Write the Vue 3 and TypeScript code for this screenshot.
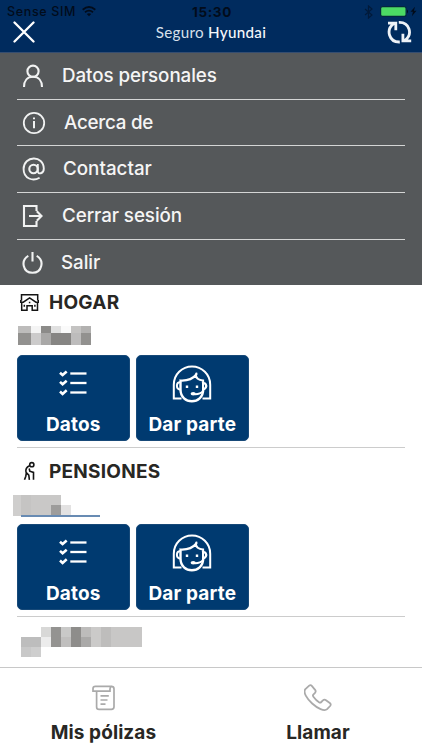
<script setup lang="ts">
type Block = [number, number, number, number, string]
interface MenuItem { icon: string; label: string }
interface Policy { id: string; title: string; blocks: Block[] }

const menu: MenuItem[] = [
  { icon: 'user', label: 'Datos personales' },
  { icon: 'info', label: 'Acerca de' },
  { icon: 'at', label: 'Contactar' },
  { icon: 'exit', label: 'Cerrar sesión' },
  { icon: 'quit', label: 'Salir' },
]

const policies: Policy[] = [
  {
    id: 'home',
    title: 'HOGAR',
    blocks: [
      [18, 7, 13, 7, '#bdbcbb'], [31, 7, 10, 7, '#f4f4f4'], [41, 7, 10, 7, '#8c8b89'], [51, 7, 10, 7, '#e0e0e0'],
      [61, 7, 10, 7, '#fafafa'], [71, 7, 10, 7, '#c4c3c2'], [81, 7, 10, 7, '#b2b1b0'],
      [18, 14, 13, 12, '#92918f'], [31, 14, 10, 12, '#cccbcb'], [41, 14, 10, 12, '#a9a8a7'], [51, 14, 20, 12, '#868583'],
      [71, 14, 10, 12, '#bdbcbc'], [81, 14, 10, 12, '#92918f'],
    ],
  },
  {
    id: 'pension',
    title: 'PENSIONES',
    blocks: [
      [13, 7, 8, 21, '#cfcecd'], [21, 7, 10, 21, '#c5c4c3'], [31, 7, 30, 21, '#c9c8c7'],
      [51, 17, 10, 10, '#9d9c9b'], [61, 17, 10, 10, '#e3e2e2'], [21, 27, 79, 1.5, '#688bb3'],
    ],
  },
]

const footerBlocks: Block[] = [
  [21, 20, 20, 10, '#bdbdbd'], [21, 30, 10, 10, '#c8c8c8'], [31, 30, 10, 10, '#cecece'],
  [41, 10, 10, 10, '#d8d8d7'], [41, 20, 10, 10, '#ececec'], [51, 10, 10, 20, '#949391'],
  [61, 10, 10, 10, '#c9c9c8'], [61, 20, 10, 10, '#c0bfbe'], [71, 10, 10, 20, '#8e8d8b'],
  [81, 10, 10, 10, '#bdbcbb'], [81, 20, 10, 10, '#aaa9a8'], [91, 10, 10, 20, '#cbcac9'],
  [101, 10, 10, 20, '#bebdbc'], [111, 10, 31, 20, '#c8c7c6'],
]
</script>

<template>
  <div class="screen">
    <header class="header">
      <div class="status">
        <div class="carrier">
          <span>Sense SIM</span>
          <svg width="14" height="11" viewBox="0 0 14 11" fill="none" stroke="#020c1b" stroke-width="1.8">
            <path d="M.7 3.7Q7-1.7 13.3 3.7M3 6.2Q7 3 11 6.2" />
            <path d="M4.8 8Q7 6.3 9.2 8L7 10.3Z" fill="#020c1b" stroke="none" />
          </svg>
        </div>
        <span class="clock">15:30</span>
        <div class="energy">
          <svg width="9" height="14" viewBox="0 0 9 14" fill="none" stroke="#011a3a" stroke-width="1.2"><path d="m1 4 7 6-3.5 3V1L8 4l-7 6" /></svg>
          <svg width="37" height="11" viewBox="0 0 37 11">
            <rect x=".6" y=".6" width="25.5" height="9.8" rx="2" fill="#4cda64" stroke="#03263f" stroke-width="1.2" />
            <path d="M27 3.5q2 2 0 4Z" fill="#020c1b" />
            <path d="m35 .8-4.5 5h2.4l-1 4.4 4.6-5.4h-2.6Z" fill="#020c1b" />
          </svg>
        </div>
      </div>
      <div class="titlebar">
        <svg width="22" height="22" viewBox="0 0 22 22" fill="none" stroke="#fff" stroke-width="2.3" stroke-linecap="round"><path d="m1.500 1.500 19 19M20.500 1.500l-19 19" /></svg>
        <h1>Seguro <b>Hyundai</b></h1>
        <svg width="25" height="24" viewBox="0 0 25 24" fill="none" stroke="#eef2f7" stroke-width="2.8">
          <path d="M12.800 22C2 22.400-1.600 9.600 6.800 3.700M1 3.200h7.800v7M11.800 2.400c10.800-.4 14.400 12 6 17.900M24.200 20.800h-8.300v-7" />
        </svg>
      </div>
    </header>

    <nav class="menu">
      <a v-for="item in menu" :key="item.label" class="menu-item" :class="item.icon">
        <svg width="24" height="24" viewBox="0 0 24 24" fill="none" stroke="#f1f2f2" stroke-width="2.1">
          <template v-if="item.icon === 'user'">
            <circle cx="11" cy="7.2" r="5.6" />
            <path d="M2 23c0-6.200 3.300-10.200 9-10.200s9 4 9 10.200" />
          </template>
          <template v-else-if="item.icon === 'info'">
            <circle cx="12" cy="12" r="10.200" stroke-width="1.800" />
            <path d="M12 10v7.200M12 6.500v1.800" stroke-width="2" />
          </template>
          <template v-else-if="item.icon === 'at'">
            <circle cx="11.500" cy="12" r="4.200" />
            <path d="M15.800 7v7.300c0 3.400 6 2.600 6-2.500 0-14.200-20.200-13.400-20.200.3 0 9.700 9.300 12.500 16 8.600" stroke-width="1.900" />
          </template>
          <template v-else-if="item.icon === 'exit'">
            <path d="M14.500 7V2H2v20h12.500v-5M7 12h12.500M14.800 7.300l4.700 4.700-4.700 4.700" />
          </template>
          <template v-else>
            <path d="M6.300 4.800C-1.600 9.300.8 21.800 10.500 21.800S22.700 9.300 14.700 4.800M10.500 1v9.500" />
          </template>
        </svg>
        <span>{{ item.label }}</span>
      </a>
    </nav>

    <main class="content">
      <section v-for="policy in policies" :key="policy.id" class="policy" :class="policy.id">
        <div class="heading">
          <svg v-if="policy.id === 'home'" width="20" height="20" viewBox="0 0 20 20" fill="none" stroke="#151515" stroke-width="1.500">
            <path d="M2.500 8.500V2.800h16.200v5.700M1.800 8v2.200h2.500l6.300-4.200 6.300 4.200h2.500V8M2.700 10v8.200h5.300v-4.500h5.200v4.500h5.300V10M5.300 12.700v2M15.900 12.700v2M10.600 9.800v1.500" />
          </svg>
          <svg v-else width="20" height="20" viewBox="0 0 20 20" fill="none" stroke="#151515" stroke-width="1.600">
            <circle cx="12.800" cy="3.700" r="2.100" />
            <path d="M10.500 4.700C7.700 6 6.400 8.400 7 11.200l2.800 3 .6 4.600M7.300 12.200l-.5 3L5.500 18.700M10.200 7.500l.6 2.700 3.700 1.200v7.400" />
          </svg>
          <h2>{{ policy.title }}</h2>
        </div>
        <svg class="redacted" width="160" height="36" viewBox="0 1 160 36" shape-rendering="crispEdges">
          <rect v-for="(b, i) in policy.blocks" :key="i" :x="b[0]" :y="b[1] + 1" :width="b[2]" :height="b[3]" :fill="b[4]" />
        </svg>
        <div class="actions">
          <button type="button" class="action">
            <svg width="28" height="26" viewBox="0 0 28 26" fill="none" stroke="#fff" stroke-width="2.300">
              <path v-for="y in [3.5, 13, 22.5]" :key="y" :d="`M11.3 ${y}H27.5`" />
              <path v-for="y in [3.5, 12.7, 22.3]" :key="`c${y}`" :d="`M1 ${y - .8}l2.6 2.4L7.7 ${y - 2}`" stroke-width="2.600" />
            </svg>
            <span>Datos</span>
          </button>
          <button type="button" class="action">
            <svg class="agent" width="40" height="38" viewBox="0 0 40 38" fill="none" stroke="#fff" stroke-width="2">
              <path d="M9.500 33.500H1.800V19.700a18.200 18.200 0 0 1 36.400 0v13.800h-7.700" />
              <path d="M8.500 18v-2.500c6.500.3 12-1.200 15.300-5.500.4 3.500 3 5.200 7.200 5.500V18" stroke-width="2.200" />
              <path d="M24.400 10V7.800M8.500 17c-3 .2-3.600 1.800-3.600 3.800s.8 3.800 4 4M31 17v8.200" />
              <path d="M8.500 17.400v7.100c0 15.700 22.700 15.700 22.700 0M32 17.700q4.500 3 0 6.700" stroke-width="2.400" />
              <path d="M31 26.200q-3 3.500-9.200 3" stroke-width="1.800" />
              <path d="M15 20.500v2.600M25 20.500v2.600" stroke-width="2.400" />
              <ellipse cx="21.200" cy="28.800" rx="2.600" ry="1.700" fill="#fff" stroke="none" />
            </svg>
            <span>Dar parte</span>
          </button>
        </div>
      </section>
      <svg class="trailing" width="160" height="44" viewBox="0 0 160 44" shape-rendering="crispEdges">
        <rect v-for="(b, i) in footerBlocks" :key="i" :x="b[0]" :y="b[1]" :width="b[2]" :height="b[3]" :fill="b[4]" />
      </svg>
    </main>

    <footer class="tabs">
      <a class="tab documents">
        <svg width="24" height="26" viewBox="0 0 24 26" fill="none" stroke="#aaa" stroke-width="1.700">
          <path d="M4.600 6.200V22q0 2.400 2.500 2.400h12.300q2.600 0 2.600-2.600V4q0-2.700-2.700-2.700H3.400Q1 1.300 1 3.500v2.700h17V4q0-2 1.800-2.700M8.500 10.800h8.300M8.500 15h7M8.500 19.200h5" />
        </svg>
        <span>Mis pólizas</span>
      </a>
      <a class="tab call">
        <svg width="28" height="28" viewBox="0 0 28 28" fill="none" stroke="#aaa" stroke-width="1.800" stroke-linejoin="round">
          <path d="M1.400 5.100 5.200 1.600Q6.600.5 8 2.100l3.100 3.700q1.200 1.600-.1 3.100L9.300 10.600q-.8 1 .1 2.200 2.600 3.600 5.600 5.400 1.300.8 2.300-.2l1.600-1.600q1.500-1.400 3.100-.2l3.800 2.800q1.700 1.400.3 3l-3 3.200c-5.600 5.100-27-13.700-21.700-20.100Z" />
        </svg>
        <span>Llamar</span>
      </a>
    </footer>
  </div>
</template>

<style>
body { margin: 0; background: #fff; }
</style>

<style scoped>
* { box-sizing: border-box; }
.screen { width: 422px; height: 750px; display: flex; flex-direction: column; overflow: hidden; font-family: Inter, sans-serif; color: #282724; background: #fff; }
svg { display: block; flex: none; }
.header { height: 53px; flex: none; background: #002b5e; border-bottom: 1px solid #354d70; }
.status { height: 21px; padding: 2px 5px 0 7px; display: grid; grid-template-columns: 1fr auto 1fr; align-items: center; color: #020c1b; font-size: 12.5px; }
.carrier { display: flex; align-items: center; gap: 6px; font-weight: 500; letter-spacing: .65px; }
.clock { font-weight: 700; font-size: 13.5px; letter-spacing: .6px; }
.energy { display: flex; align-items: center; justify-content: flex-end; gap: 7px; }
.titlebar { display: flex; height: 22px; padding: 0 10px 0 13px; align-items: center; justify-content: space-between; }
h1 { margin: 0; font: 400 15.2px/20px Lato, sans-serif; color: #d7e0eb; letter-spacing: .28px; }
h1 b { font-weight: 500; color: #f4f7fa; }
.menu { height: 232px; flex: none; padding: 0 17px; background: #55585a; color: #f5f5f5; }
.menu-item { height: 46.7px; display: flex; align-items: center; gap: 16px; padding-left: 5px; border-bottom: 1.5px solid #d4d5d5; font-size: 18.8px; font-weight: 550; letter-spacing: -.08px; line-height: 24px; }
.menu-item:last-child { border-bottom: 0; }
.menu-item.info { gap: 18px; letter-spacing: -.25px; }
.menu-item.at { gap: 17px; letter-spacing: 0; }
.menu-item.quit { gap: 15px; }
.content { height: 382px; flex: none; }
.policy { height: 169px; }
.policy.home { height: 163px; }
.policy::after { content: ''; display: block; height: 1px; margin: 6px 17px 0; background: #ccc; }
.heading { height: 34px; display: flex; align-items: center; gap: 10px; padding-left: 19px; }
.pension .heading { height: 40px; padding-top: 6px; }
h2 { margin: 0; padding-top: 2px; font-size: 19px; line-height: 24px; font-weight: 700; letter-spacing: .25px; }
.actions { display: flex; gap: 6.5px; padding-left: 17px; }
.action { width: 112.5px; height: 86px; padding: 14px 0 0; border: 1px solid #174978; border-radius: 5px; background: #003a70; color: #fff; font: 750 19px/24px Inter, sans-serif; letter-spacing: .15px; display: flex; flex-direction: column; align-items: center; }
.action svg { margin-bottom: 16.5px; }
.action .agent { margin: -5px 0 9.5px; }
.tabs { height: 83px; border-top: 1px solid #c8c8c8; display: flex; flex: none; }
.tab { flex: none; display: flex; flex-direction: column; align-items: center; font-size: 19px; line-height: 24px; font-weight: 700; letter-spacing: .08px; }
.documents { width: 207px; padding-top: 17px; }
.documents svg { margin: 0 0 10px 1px; }
.call { width: 222px; padding-top: 16px; }
.call svg { margin-bottom: 9px; }
</style>
